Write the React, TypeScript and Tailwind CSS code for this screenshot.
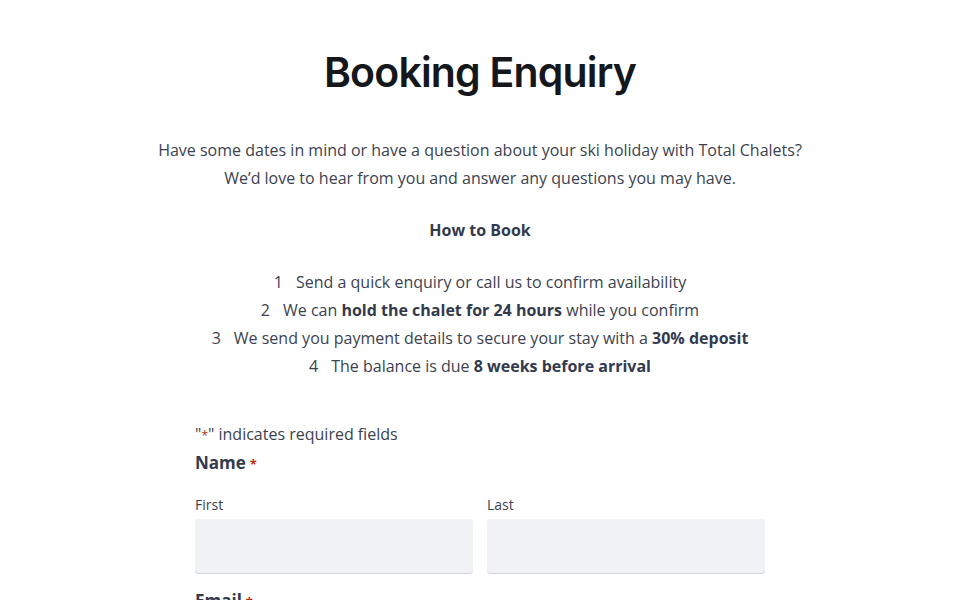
import React from 'react';

const steps: { n: number; content: React.ReactNode }[] = [
  { n: 1, content: <>Send a quick enquiry or call us to confirm availability</> },
  { n: 2, content: <>We can <strong className="font-bold text-[#333a4d]">hold the chalet for 24 hours</strong> while you confirm</> },
  { n: 3, content: <>We send you payment details to secure your stay with a <strong className="font-bold text-[#333a4d]">30% deposit</strong></> },
  { n: 4, content: <>The balance is due <strong className="font-bold text-[#333a4d]">8 weeks before arrival</strong></> },
];

const Field: React.FC<{ label: string }> = ({ label }) => (
  <div className="flex-1">
    <label className="block text-[14px] leading-5 text-[#3c4250]">{label}</label>
    <input
      type="text"
      className="mt-1 block h-[54px] w-full rounded-[4px] bg-[#f0f2f5] shadow-[0_1px_0_#d3d6da] outline-none"
    />
  </div>
);

const App: React.FC = () => {
  return (
    <div className="min-h-screen bg-white pt-[47px] text-[16px] text-[#3c4250]" style={{ fontFamily: '"Open Sans", "Noto Sans", sans-serif' }}>
      <h1
        className="text-center text-[41px] font-semibold leading-[50px] tracking-[-0.02em] text-[#15171c]"
        style={{ fontFamily: 'Inter, "Noto Sans", sans-serif' }}
      >
        Booking Enquiry
      </h1>

      <p className="mt-[39px] text-center leading-7">
        Have some dates in mind or have a question about your ski holiday with Total Chalets?
        <br />
        We’d love to hear from you and answer any questions you may have.
      </p>

      <h2 className="mt-6 text-center font-bold leading-7 text-[#333a4d]">How to Book</h2>

      <ol className="mt-6 text-center leading-7">
        {steps.map((s) => (
          <li key={s.n}>
            <span className="mr-[13px]">{s.n}</span>
            {s.content}
          </li>
        ))}
      </ol>

      <form className="mx-auto mt-10 w-[570px]">
        <p className="h-7 leading-7">
          "<span className="text-[12px] leading-none text-[#c02b0a]">*</span>" indicates required fields
        </p>
        <fieldset className="mt-[3px]">
          <legend className="h-6 text-[17px] font-bold leading-6 text-[#333a4d]">
            Name<span className="ml-1 text-[13px] leading-none text-[#c02b0a]">*</span>
          </legend>
          <div className="mt-5 flex gap-[14px]">
            <Field label="First" />
            <Field label="Last" />
          </div>
        </fieldset>
        <div className="mt-4">
          <label className="block h-6 text-[17px] font-bold leading-6 text-[#333a4d]">
            Email<span className="ml-1 text-[13px] leading-none text-[#c02b0a]">*</span>
          </label>
          <input type="email" className="mt-2 block h-[54px] w-full rounded-[4px] bg-[#f0f2f5] shadow-[0_1px_0_#d3d6da] outline-none" />
        </div>
      </form>
    </div>
  );
};

export default App;
